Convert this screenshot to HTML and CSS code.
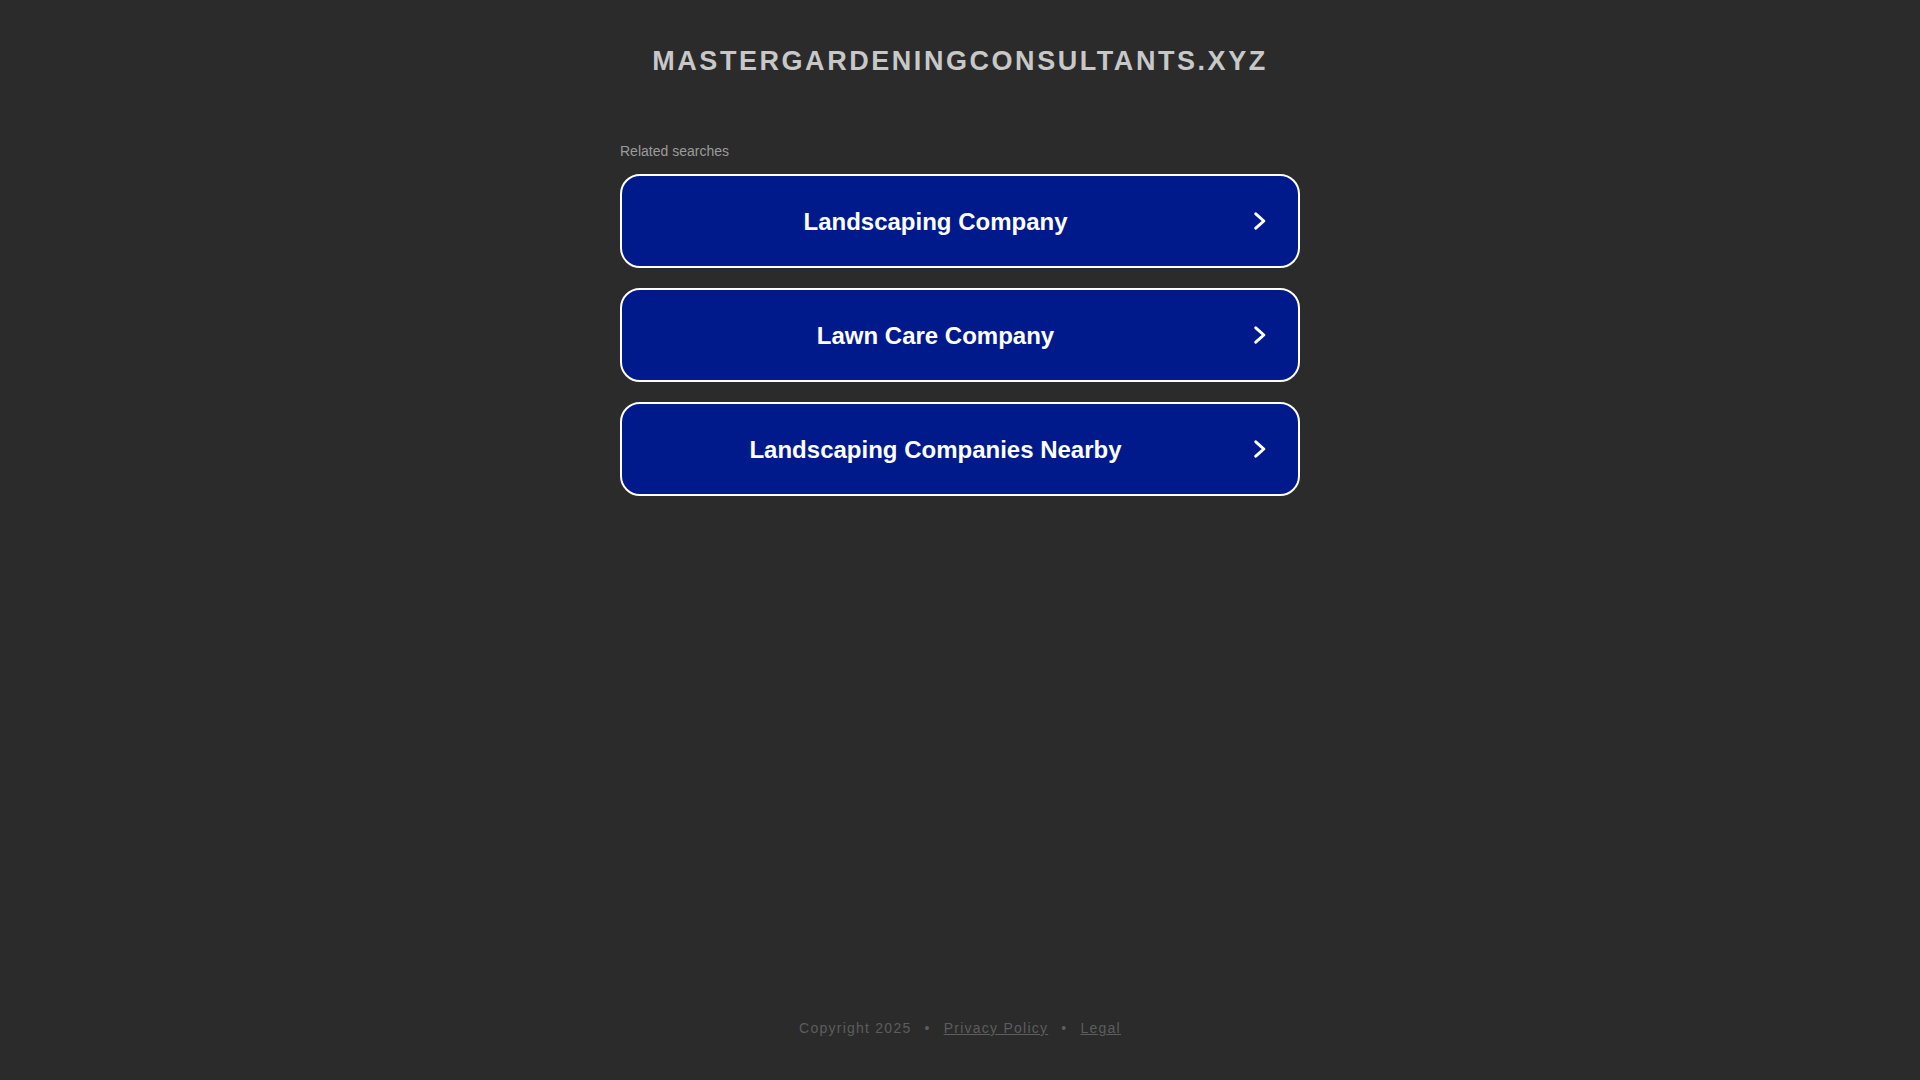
FILE: index.html
```html
<!DOCTYPE html>
<html>
<head>
<meta charset="utf-8">
<title>mastergardeningconsultants.xyz</title>
<link rel="stylesheet" href="styles.css">
</head>
<body>
<div class="page">
  <header class="header">
    <h1 class="domain">mastergardeningconsultants.xyz</h1>
  </header>
  <main class="content">
    <div class="related">Related searches</div>
    <ul class="links">
      <li><a class="link" href="#"><span class="link-text">Landscaping Company</span><svg class="chev" width="12" height="18" viewBox="0 0 12 18"><path d="M1.8 1.8 L9.8 9 L1.8 16.2" fill="none" stroke="#fff" stroke-width="3" stroke-linecap="round" stroke-linejoin="round"/></svg></a></li>
      <li><a class="link" href="#"><span class="link-text">Lawn Care Company</span><svg class="chev" width="12" height="18" viewBox="0 0 12 18"><path d="M1.8 1.8 L9.8 9 L1.8 16.2" fill="none" stroke="#fff" stroke-width="3" stroke-linecap="round" stroke-linejoin="round"/></svg></a></li>
      <li><a class="link" href="#"><span class="link-text">Landscaping Companies Nearby</span><svg class="chev" width="12" height="18" viewBox="0 0 12 18"><path d="M1.8 1.8 L9.8 9 L1.8 16.2" fill="none" stroke="#fff" stroke-width="3" stroke-linecap="round" stroke-linejoin="round"/></svg></a></li>
    </ul>
  </main>
  <footer class="footer">
    <span>Copyright 2025</span>
    <span class="dot">•</span>
    <a href="#">Privacy Policy</a>
    <span class="dot">•</span>
    <a href="#">Legal</a>
  </footer>
</div>
</body>
</html>
```

FILE: styles.css
```css
html, body {
  margin: 0;
  padding: 0;
  background: #2b2b2b;
  font-family: Arial, "Liberation Sans", sans-serif;
}
.page {
  height: 1080px;
  display: flex;
  flex-direction: column;
  align-items: center;
}
.header {
  padding-top: 44px;
}
.domain {
  margin: 0;
  font-size: 27px;
  line-height: 34px;
  font-weight: bold;
  text-transform: uppercase;
  letter-spacing: 2.55px;
  color: #c8c8c8;
  text-align: center;
}
.content {
  width: 680px;
  margin-top: 65px;
}
.related {
  font-size: 14px;
  line-height: 16px;
  color: #9b9b9b;
  margin-bottom: 15px;
}
.links {
  list-style: none;
  margin: 0;
  padding: 0;
  display: flex;
  flex-direction: column;
  gap: 20px;
}
.link {
  display: flex;
  align-items: center;
  height: 90px;
  border: 2px solid #ffffff;
  border-radius: 20px;
  background: #001a8b;
  color: #ffffff;
  text-decoration: none;
}
.link-text {
  flex: 1;
  text-align: center;
  font-size: 24px;
  font-weight: bold;
  padding-top: 2px;
}
.chev {
  margin-left: 5px;
  margin-right: 32px;
  display: block;
}
.footer {
  margin-top: auto;
  margin-bottom: 43px;
  font-size: 14px;
  letter-spacing: 1.25px;
  color: #5d5d5d;
  display: flex;
  gap: 13px;
  line-height: 18px;
}
.footer a {
  color: #5d5d5d;
  text-decoration: underline;
}
.dot {
  color: #5d5d5d;
}
```
